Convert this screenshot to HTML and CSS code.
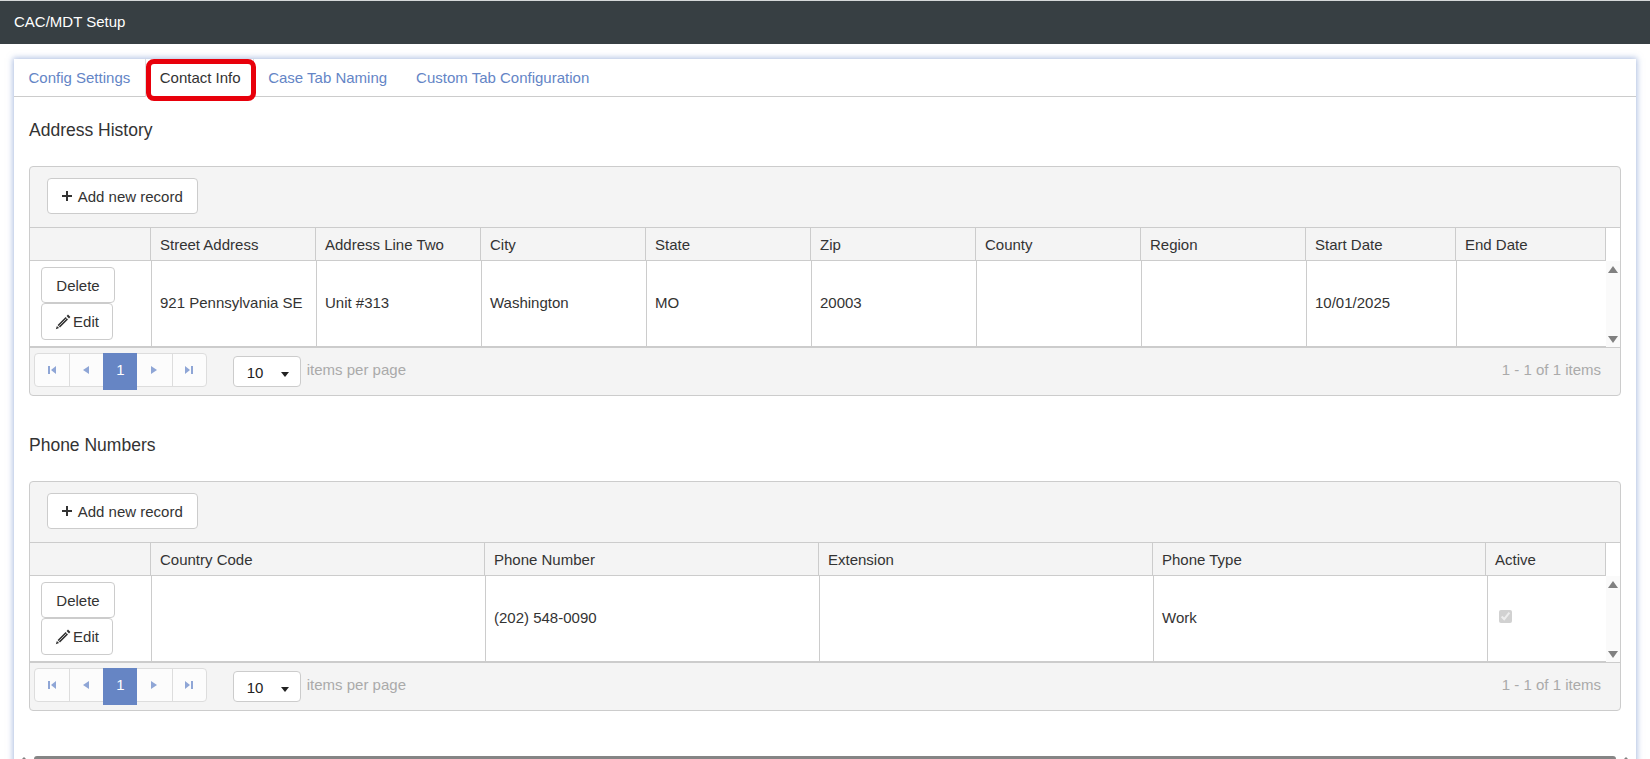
FILE: index.html
```html
<!DOCTYPE html>
<html lang="en">
<head>
<meta charset="utf-8">
<title>CAC/MDT Setup</title>
<link rel="stylesheet" href="styles.css">
</head>
<body>
<header class="topbar">CAC/MDT Setup</header>
<main class="panel">
  <nav class="tabs">
    <a class="tab">Config Settings</a>
    <a class="tab tab-active">Contact Info<span class="callout"></span></a>
    <a class="tab">Case Tab Naming</a>
    <a class="tab">Custom Tab Configuration</a>
  </nav>
  <div class="content">
    <section class="section">
      <h2 class="heading">Address History</h2>
      <div class="grid">
        <div class="toolbar">
          <button class="btn btn-add"><svg class="plus" viewBox="0 0 10 10"><path d="M4 0h2v4h4v2H6v4H4V6H0V4h4z"/></svg>Add new record</button>
        </div>
        <div class="thead cols-addr-h">
          <div class="th"></div>
          <div class="th">Street Address</div>
          <div class="th">Address Line Two</div>
          <div class="th">City</div>
          <div class="th">State</div>
          <div class="th">Zip</div>
          <div class="th">County</div>
          <div class="th">Region</div>
          <div class="th">Start Date</div>
          <div class="th">End Date</div>
          <div class="th th-filler"></div>
        </div>
        <div class="tbody">
          <div class="row cols-addr-b">
            <div class="td td-actions">
              <button class="btn btn-delete">Delete</button>
              <button class="btn btn-edit"><svg class="pencil" viewBox="0 0 16 16"><path d="M13 .6 15.4 3 14 4.4 11.6 2zM10.6 3 13 5.4 5 13.4 2.6 11zM1.9 11.9l2.2 2.2L.8 15.2z"/><path class="pencil-line" d="M4.2 11.8 11.4 4.6"/></svg>Edit</button>
            </div>
            <div class="td">921 Pennsylvania SE</div>
            <div class="td">Unit #313</div>
            <div class="td">Washington</div>
            <div class="td">MO</div>
            <div class="td">20003</div>
            <div class="td"></div>
            <div class="td"></div>
            <div class="td">10/01/2025</div>
            <div class="td"></div>
          </div>
          <div class="vscroll"><span class="arrow-up"></span><span class="arrow-down"></span></div>
        </div>
        <div class="pagerbar">
          <div class="pager">
            <span class="page"><svg class="pg" viewBox="0 0 8 8"><path d="M0 0h2v8H0zM8 0v8L3 4z"/></svg></span>
            <span class="page"><svg class="pg" viewBox="0 0 8 8"><path d="M7 0v8L1 4z"/></svg></span>
            <span class="page page-active">1</span>
            <span class="page page-after"><svg class="pg" viewBox="0 0 8 8"><path d="M1 0v8l6-4z"/></svg></span>
            <span class="page"><svg class="pg" viewBox="0 0 8 8"><path d="M8 0H6v8h2zM0 0v8l5-4z"/></svg></span>
          </div>
          <div class="select"><span>10</span><span class="caret"></span></div>
          <span class="muted">items per page</span>
          <span class="muted info">1 - 1 of 1 items</span>
        </div>
      </div>
    </section>
    <section class="section">
      <h2 class="heading">Phone Numbers</h2>
      <div class="grid">
        <div class="toolbar">
          <button class="btn btn-add"><svg class="plus" viewBox="0 0 10 10"><path d="M4 0h2v4h4v2H6v4H4V6H0V4h4z"/></svg>Add new record</button>
        </div>
        <div class="thead cols-phone-h">
          <div class="th"></div>
          <div class="th">Country Code</div>
          <div class="th">Phone Number</div>
          <div class="th">Extension</div>
          <div class="th">Phone Type</div>
          <div class="th">Active</div>
          <div class="th th-filler"></div>
        </div>
        <div class="tbody">
          <div class="row cols-phone-b">
            <div class="td td-actions">
              <button class="btn btn-delete">Delete</button>
              <button class="btn btn-edit"><svg class="pencil" viewBox="0 0 16 16"><path d="M13 .6 15.4 3 14 4.4 11.6 2zM10.6 3 13 5.4 5 13.4 2.6 11zM1.9 11.9l2.2 2.2L.8 15.2z"/><path class="pencil-line" d="M4.2 11.8 11.4 4.6"/></svg>Edit</button>
            </div>
            <div class="td"></div>
            <div class="td">(202) 548-0090</div>
            <div class="td"></div>
            <div class="td">Work</div>
            <div class="td"><input class="check" type="checkbox" checked disabled></div>
          </div>
          <div class="vscroll"><span class="arrow-up"></span><span class="arrow-down"></span></div>
        </div>
        <div class="pagerbar">
          <div class="pager">
            <span class="page"><svg class="pg" viewBox="0 0 8 8"><path d="M0 0h2v8H0zM8 0v8L3 4z"/></svg></span>
            <span class="page"><svg class="pg" viewBox="0 0 8 8"><path d="M7 0v8L1 4z"/></svg></span>
            <span class="page page-active">1</span>
            <span class="page page-after"><svg class="pg" viewBox="0 0 8 8"><path d="M1 0v8l6-4z"/></svg></span>
            <span class="page"><svg class="pg" viewBox="0 0 8 8"><path d="M8 0H6v8h2zM0 0v8l5-4z"/></svg></span>
          </div>
          <div class="select"><span>10</span><span class="caret"></span></div>
          <span class="muted">items per page</span>
          <span class="muted info">1 - 1 of 1 items</span>
        </div>
      </div>
    </section>
    <div class="hscroll"><span class="arrow-left"></span><span class="hthumb"></span><span class="arrow-right"></span></div>
  </div>
</main>
</body>
</html>
```

FILE: styles.css
```css
* { box-sizing: border-box; }
html, body { margin: 0; height: 759px; overflow: hidden; }
body {
  background: #fff;
  color: #333;
  font-family: "Liberation Sans", Arial, sans-serif;
  font-size: 15px;
  line-height: 20px;
}
.topbar {
  height: 44px;
  border-top: 1px solid #d5d8d9;
  background: #373f43;
  color: #fff;
  font-size: 15px;
  line-height: 41px;
  padding-left: 14px;
}
.panel {
  margin: 15px 14px 0;
  background: #fff;
  box-shadow: 0 0 6px 1px rgba(100, 133, 198, .55);
  height: 760px;
}
.tabs {
  display: flex;
  height: 38px;
  border-bottom: 1px solid #ccc;
}
.tab {
  position: relative;
  color: #6485c6;
  padding: 0 14px;
  line-height: 38px;
  border-right: 1px solid transparent;
}
.tab:first-child { padding: 0 13.5px 0 14.5px; }
.tab-active {
  color: #333;
  background: #fff;
  height: 38px;
  padding-right: 12.5px;
  border-left: 1px solid #ddd;
  border-right: 1px solid #ddd;
}
.callout {
  position: absolute;
  left: 0;
  top: 0;
  width: 110px;
  height: 42px;
  border: 5px solid #e8000b;
  border-radius: 8px;
}
.content { padding: 0 15px; }
.section { padding-top: 22px; margin-bottom: 16px; }
.heading {
  margin: 0 0 25px;
  font-size: 17.5px;
  font-weight: 400;
  line-height: 22px;
}
.grid {
  border: 1px solid #ccc;
  border-radius: 4px;
  background: #f4f4f4;
  overflow: hidden;
}
.toolbar {
  padding: 11px 17px 13px;
  height: 61px;
  border-bottom: 1px solid #ccc;
}
.btn {
  display: inline-flex;
  align-items: center;
  justify-content: center;
  background: #fff;
  border: 1px solid #ccc;
  border-radius: 4px;
  color: #333;
  font: inherit;
  padding: 2px 0 0;
  height: 36px;
}
.btn-add { width: 151px; }
.plus { width: 10px; height: 10px; margin: -2px 5.5px 0 0; fill: #333; }
.thead { display: grid; height: 33px; border-bottom: 1px solid #ccc; }
.cols-addr-h { grid-template-columns: 120px repeat(7, 165px) 150px 150px 15px; }
.cols-phone-h { grid-template-columns: 120px 334px 334px 334px 333px 120px 15px; }
.cols-addr-b { grid-template-columns: 121px repeat(7, 165px) 150px 150px; }
.cols-phone-b { grid-template-columns: 121px 334px 334px 334px 334px 119px; }
.th {
  border-left: 1px solid #ccc;
  padding-left: 9px;
  line-height: 33px;
  white-space: nowrap;
}
.th:first-child { border-left: 0; }
.th-filler { background: #fff; }
.tbody { display: flex; height: 86px; background: #fff; }
.row { display: grid; flex: 1; border-bottom: 1px solid #ccc; }
.td {
  display: flex;
  align-items: center;
  border-left: 1px solid #ccc;
  padding: 0 0 2px 8px;
  white-space: nowrap;
}
.td:first-child { border-left: 0; }
.td-actions {
  flex-direction: column;
  align-items: flex-start;
  justify-content: flex-start;
  padding: 6px 0 0 11px;
}
.btn-delete { width: 74px; }
.btn-edit { width: 72px; height: 37px; padding-top: 0; }
.pencil { width: 16px; height: 16px; margin-right: 2px; fill: #333; }
.pencil-line { fill: none; stroke: #fff; stroke-width: .7; }
.vscroll {
  width: 14px;
  background: #fafafa;
  display: flex;
  flex-direction: column;
  justify-content: space-between;
  align-items: center;
  padding: 5px 0 4px;
}
.arrow-up, .arrow-down { width: 0; height: 0; border-left: 5px solid transparent; border-right: 5px solid transparent; }
.arrow-up { border-bottom: 7px solid #808080; }
.arrow-down { border-top: 7px solid #808080; }
.pagerbar {
  display: flex;
  align-items: center;
  height: 48px;
  border-top: 1px solid #ccc;
  padding: 0 19px 0 4px;
}
.pager {
  display: flex;
  height: 34px;
  margin-top: -3px;
  border: 1px solid #ddd;
  border-radius: 4px;
  background: #fcfcfc;
}
.page {
  display: flex;
  align-items: center;
  justify-content: center;
  width: 34.2px;
  border-left: 1px solid #ddd;
}
.page:first-child { border-left: 0; width: 33.5px; }
.page:nth-child(2) { width: 34.9px; }
.page-active {
  width: 34px;
  height: 37px;
  margin-top: -1px;
  border-left: 0;
  background: #6685c4;
  color: #fff;
  line-height: 32px;
  padding-bottom: 4px;
}
.page-after { border-left: 0; }
.pg { width: 8px; height: 8px; fill: #8fa6d6; }
.select {
  display: flex;
  align-items: center;
  justify-content: space-between;
  width: 68px;
  height: 31px;
  margin-left: 26px;
  padding: 3px 11px 0 13px;
  background: #fff;
  border: 1px solid #ccc;
  border-radius: 4px;
  color: #222;
}
.caret { width: 0; height: 0; border-left: 4px solid transparent; border-right: 4px solid transparent; border-top: 5px solid #222; margin-top: 2px; }
.muted { color: #aaa; margin-top: -3px; margin-left: 6px; }
.info { margin-left: auto; }
.hscroll {
  display: flex;
  align-items: flex-start;
  height: 6px;
  margin: 45px -9px 0 -9px;
  gap: 6px;
}
.hthumb { flex: 1; height: 8px; background: #858585; border-radius: 3px 3px 0 0; }
.arrow-left, .arrow-right { width: 0; height: 0; margin-top: 1px; border-left: 4px solid transparent; border-right: 4px solid transparent; border-bottom: 4px solid #808080; }
.check { margin: -3px 0 0 3px; }
```
